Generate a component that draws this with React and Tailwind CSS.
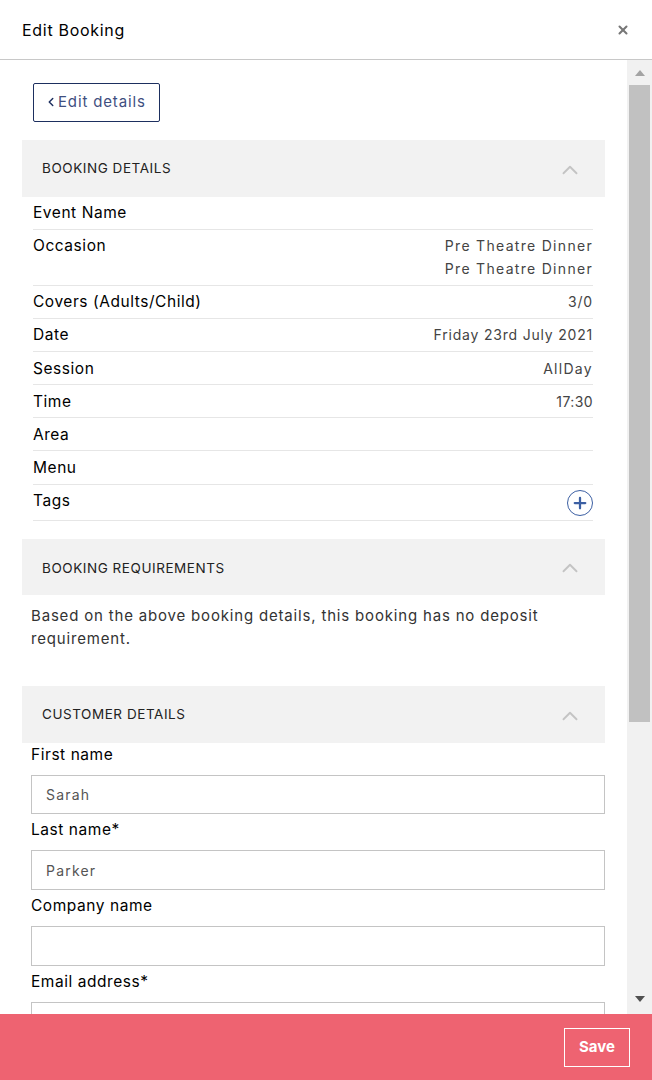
import { X, ChevronUp, ChevronLeft, Plus } from 'lucide-react';

const font = { fontFamily: 'Inter' };

function SectionHeader({ title, className, titleClass = '' }) {
    return (
        <div className={`flex items-center justify-between ml-[22px] w-[583px] bg-[#f2f2f2] pl-5 pr-[22px] ${className}`}>
            <span className={`text-[13.5px] tracking-[0.55px] text-[#222] ${titleClass}`}>{title}</span>
            <ChevronUp className="w-[26px] h-[26px] text-[#c4c4c4] mt-0.5" strokeWidth={1.75} />
        </div>
    );
}

function Row({ label, value, className = 'h-[33px] pt-[7px]', valueClass = 'tracking-[0.8px]' }) {
    return (
        <div className={`flex justify-between border-b border-[#e6e6e6] ${className}`}>
            <span className="text-[15.5px] leading-[18px] tracking-[0.55px] text-black">{label}</span>
            <div className={`text-right text-sm leading-[23px] -mt-[3px] text-[#444] ${valueClass}`}>{value}</div>
        </div>
    );
}

function Field({ label, value, className = 'h-10' }) {
    return (
        <div className="w-[574px] ml-[31px]">
            <div className="text-[15.5px] leading-[18px] tracking-[0.55px] text-black">{label}</div>
            <div className={`mt-[11px] mb-[7px] border border-[#c4c4c4] pl-[14px] flex items-center text-sm tracking-[1.2px] text-[#555] ${className}`}>
                {value}
            </div>
        </div>
    );
}

export default function App() {
    return (
        <div className="w-[652px] h-[1080px] flex flex-col overflow-hidden bg-white" style={font}>
            <div className="h-[60px] shrink-0 flex items-center justify-between border-b border-[#c8c8c8] pl-[22px] pr-[22px]">
                <h1 className="text-[16px] tracking-[0.7px] text-black">Edit Booking</h1>
                <X className="w-3.5 h-3.5 text-[#777]" strokeWidth={3.5} />
            </div>

            <div className="flex-1 flex min-h-0">
                <div className="w-[627px] overflow-hidden">
                    <button className="mt-[23px] ml-[33px] w-[127px] h-[39px] border border-[#1d2f5f] rounded-[2px] flex items-center pl-[10px] text-[15px] tracking-[0.85px] text-[#3f4f7f]">
                        <ChevronLeft className="w-3.5 h-3.5 text-[#1d2f5f] -mt-0.5" strokeWidth={2.5} />
                        <span>Edit details</span>
                    </button>

                    <SectionHeader title="BOOKING DETAILS" className="mt-[18px] h-[57px]" />
                    <div className="ml-[33px] w-[560px]">
                        <Row label="Event Name" />
                        <Row
                            label="Occasion"
                            className="h-[56px] pt-[7px]"
                            valueClass="tracking-[1.3px]"
                            value={<>Pre Theatre Dinner<br />Pre Theatre Dinner</>}
                        />
                        <Row label="Covers (Adults/Child)" value="3/0" />
                        <Row label="Date" value="Friday 23rd July 2021" />
                        <Row label="Session" value="AllDay" className="h-[33px] pt-[8px]" valueClass="tracking-[1.3px]" />
                        <Row label="Time" value="17:30" className="h-[33px] pt-[8px]" valueClass="tracking-[0.4px]" />
                        <Row label="Area" className="h-[33px] pt-[8px]" />
                        <Row label="Menu" className="h-[34px] pt-[8px]" />
                        <div className="flex justify-between items-center h-9 border-b border-[#e6e6e6]">
                            <span className="text-[15.5px] leading-[18px] tracking-[0.55px] text-black -mt-1">Tags</span>
                            <span className="w-[26px] h-[26px] rounded-full border border-[#3c5fa3] flex items-center justify-center">
                                <Plus className="w-[18px] h-[18px] text-[#3c5fa3]" strokeWidth={3} />
                            </span>
                        </div>
                    </div>

                    <SectionHeader title="BOOKING REQUIREMENTS" className="mt-[18px] h-[56px]" titleClass="mt-0.5" />
                    <p className="ml-[31px] w-[560px] mt-[9px] text-[15px] leading-[23px] tracking-[0.82px] text-[#333]">
                        Based on the above booking details, this booking has no deposit requirement.
                    </p>

                    <SectionHeader title="CUSTOMER DETAILS" className="mt-[36px] h-[57px]" />
                    <div className="pt-[3px]">
                        <Field label="First name" value="Sarah" className="h-[39px]" />
                        <Field label="Last name*" value="Parker" className="h-10 pt-px" />
                        <Field label="Company name" />
                        <Field label="Email address*" />
                    </div>
                </div>

                <div className="w-[25px] bg-[#f1f1f1] flex flex-col items-center">
                    <div className="h-[25px] flex items-center justify-center">
                        <div className="w-0 h-0 border-x-[5.5px] border-x-transparent border-b-[6px] border-b-[#a3a3a3]" />
                    </div>
                    <div className="w-[21px] h-[637px] bg-[#c1c1c1]" />
                    <div className="flex-1" />
                    <div className="h-[30px] flex items-center justify-center">
                        <div className="w-0 h-0 border-x-[5.5px] border-x-transparent border-t-[6px] border-t-[#505050]" />
                    </div>
                </div>
            </div>

            <div className="h-[66px] shrink-0 bg-[#ee6371] flex items-center justify-end pr-[22px]">
                <button className="w-[66px] h-[39px] border border-white text-white text-[15px] font-bold">Save</button>
            </div>
        </div>
    );
}
